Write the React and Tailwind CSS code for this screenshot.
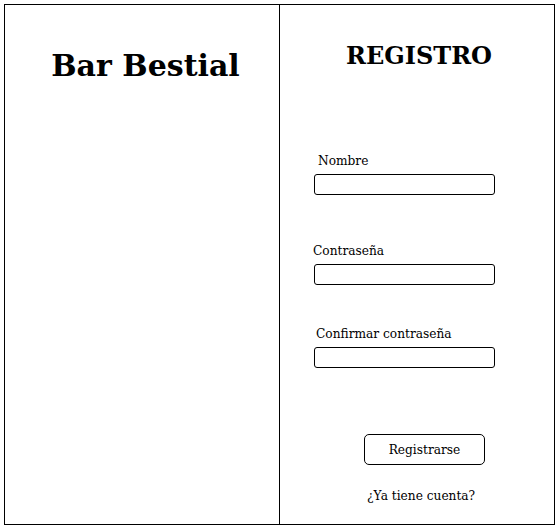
export default function App() {
  return (
    <div className="p-1 bg-white font-['DejaVu_Serif',serif]">
      <div className="flex w-[551px] h-[521px] border border-black text-black">
        <div className="w-[275px] border-r border-black flex flex-col items-center pt-[42px] pl-[7px]">
          <h1 className="text-[30px] font-bold leading-[37px]">Bar Bestial</h1>
        </div>
        <div className="flex-1 flex flex-col">
          <h2 className="text-[24px] font-bold leading-[28px] text-center pl-[4px] mt-[37px]">REGISTRO</h2>
          <form className="flex flex-col pl-[34px] mt-[83px]">
            <label className="text-[12.2px] leading-[17px] ml-[4px]">Nombre</label>
            <input className="mt-[4px] w-[181px] h-[21px] border border-black rounded-[3px]" />
            <label className="text-[12.2px] leading-[17px] -ml-[1px] mt-[48px]">Contraseña</label>
            <input className="mt-[4px] w-[181px] h-[21px] border border-black rounded-[3px]" type="password" />
            <label className="text-[12.2px] leading-[17px] ml-[2px] mt-[41px]">Confirmar contraseña</label>
            <input className="mt-[4px] w-[181px] h-[21px] border border-black rounded-[3px]" type="password" />
            <button type="button" className="ml-[50px] mt-[66px] w-[121px] h-[31px] pt-[2px] border border-black rounded-[5px] text-[12.2px] bg-white">
              Registrarse
            </button>
            <a className="ml-[53px] mt-[23px] text-[12.2px] leading-[17px]">¿Ya tiene cuenta?</a>
          </form>
        </div>
      </div>
    </div>
  );
}
